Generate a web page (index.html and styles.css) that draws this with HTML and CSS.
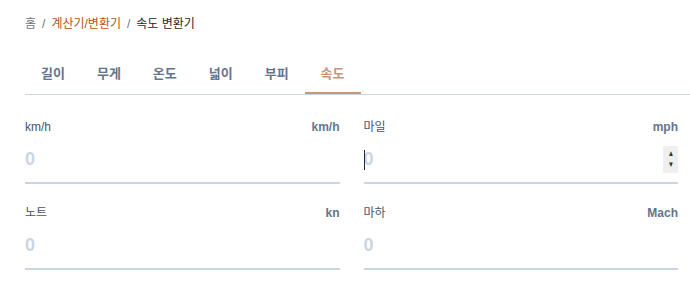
FILE: index.html
```html
<!DOCTYPE html>
<html lang="ko">

<head>
    <meta charset="UTF-8">
    <meta name="viewport" content="width=device-width, initial-scale=1.0">
    <title>속도 변환기</title>
    <link rel="stylesheet" href="styles.css">
</head>

<body>
    <div class="page">
        <div class="breadcrumb">
            <span class="crumb-home">홈</span>
            <span class="sep">/</span>
            <span class="crumb-link">계산기/변환기</span>
            <span class="sep">/</span>
            <span class="crumb-current">속도 변환기</span>
        </div>

        <div class="tabs">
            <a class="tab">길이</a>
            <a class="tab">무게</a>
            <a class="tab">온도</a>
            <a class="tab">넓이</a>
            <a class="tab">부피</a>
            <a class="tab active">속도</a>
        </div>

        <div class="converter">
            <div class="field">
                <div class="field-head">
                    <label for="kmh">km/h</label>
                    <span class="unit">km/h</span>
                </div>
                <div class="input-wrap">
                    <input type="number" id="kmh" placeholder="0">
                </div>
            </div>
            <div class="field">
                <div class="field-head">
                    <label for="mph">마일</label>
                    <span class="unit">mph</span>
                </div>
                <div class="input-wrap focused">
                    <span class="caret"></span>
                    <input type="number" id="mph" placeholder="0">
                    <span class="spin"><i>&#9650;</i><i>&#9660;</i></span>
                </div>
            </div>
            <div class="field">
                <div class="field-head">
                    <label for="kn">노트</label>
                    <span class="unit">kn</span>
                </div>
                <div class="input-wrap">
                    <input type="number" id="kn" placeholder="0">
                </div>
            </div>
            <div class="field">
                <div class="field-head">
                    <label for="mach">마하</label>
                    <span class="unit">Mach</span>
                </div>
                <div class="input-wrap">
                    <input type="number" id="mach" placeholder="0">
                </div>
            </div>
        </div>
    </div>
</body>

</html>
```

FILE: styles.css
```css
* {
    margin: 0;
    padding: 0;
    box-sizing: border-box;
    font-family: "Liberation Sans", "Noto Sans CJK KR", sans-serif;
}

body {
    background: #fff;
}

.page {
    padding: 16px 0 0 25px;
}

.breadcrumb {
    display: flex;
    align-items: center;
    gap: 6px;
    font-size: 12px;
    line-height: 16px;
    color: #71717a;
}

.crumb-link {
    color: #b4531a;
}

.crumb-current {
    color: #27272a;
}

.tabs {
    display: flex;
    margin-top: 23px;
    border-bottom: 1px solid #cbd5e1;
}

.tab {
    padding: 10px 16px 10px;
    font-size: 13px;
    line-height: 17px;
    font-weight: bold;
    color: #64748b;
    border-bottom: 2px solid transparent;
}

.tab.active {
    color: #c8957a;
    border-bottom-color: #c8957a;
}

.converter {
    display: grid;
    grid-template-columns: 1fr 1fr;
    column-gap: 24px;
    row-gap: 21px;
    padding: 24px 12px 0 0;
}

.field-head {
    display: flex;
    justify-content: space-between;
    align-items: center;
    font-size: 12px;
    line-height: 16px;
}

.field-head label {
    color: #475569;
}

.unit {
    color: #64748b;
    font-weight: bold;
}

.input-wrap {
    position: relative;
    margin-top: 5px;
}

.input-wrap input {
    display: block;
    width: 100%;
    height: 44px;
    padding-bottom: 3px;
    border: none;
    border-bottom: 2px solid #cbd5e1;
    font-size: 18px;
    font-weight: bold;
    color: #1e293b;
    background: transparent;
    -moz-appearance: textfield;
}

.input-wrap input:focus {
    outline: none;
}

.input-wrap input::-webkit-inner-spin-button,
.input-wrap input::-webkit-outer-spin-button {
    -webkit-appearance: none;
    margin: 0;
}

.input-wrap input::placeholder {
    color: #cbd5e1;
}

.caret {
    position: absolute;
    left: 0;
    top: 10px;
    width: 1px;
    height: 20px;
    background: #1e293b;
}

.spin {
    position: absolute;
    right: 0;
    top: 6px;
    width: 15px;
    height: 27px;
    display: flex;
    flex-direction: column;
    justify-content: center;
    align-items: center;
    gap: 5px;
    background: #efefef;
}

.spin i {
    font-style: normal;
    font-size: 8px;
    line-height: 6px;
    color: #333;
    transform: scaleX(0.8);
}
```
